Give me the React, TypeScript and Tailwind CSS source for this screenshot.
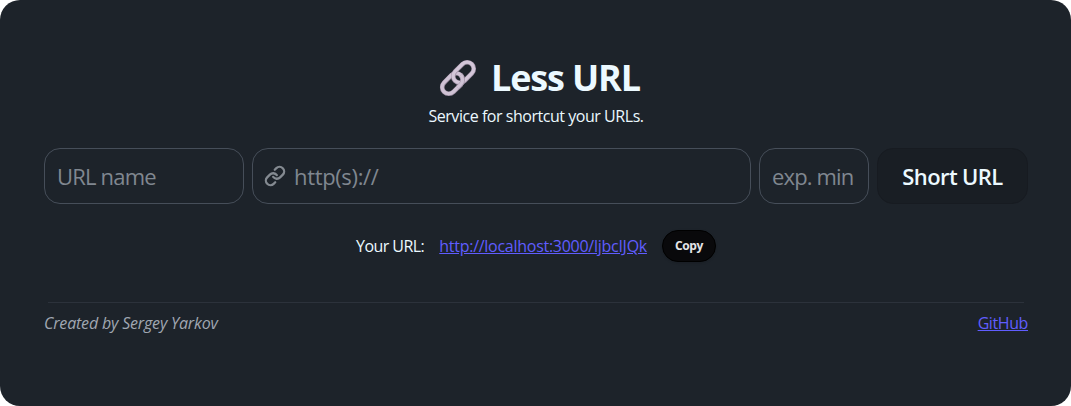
import React from "react";

function LinkIcon() {
  return (
    <svg viewBox="0 0 24 24" className="h-[22px] w-[22px] shrink-0 text-[#848a91]" fill="none" stroke="currentColor" strokeWidth="2.5" strokeLinecap="round" strokeLinejoin="round">
      <path d="M10 13a5 5 0 0 0 7.54.54l3-3a5 5 0 0 0-7.07-7.07l-1.72 1.71" />
      <path d="M14 11a5 5 0 0 0-7.54-.54l-3 3a5 5 0 0 0 7.07 7.07l1.71-1.71" />
    </svg>
  );
}

function ChainLogo() {
  return (
    <svg viewBox="0 0 38 38" className="h-[38px] w-[38px] shrink-0" fill="none">
      <defs>
        <clipPath id="crossing">
          <rect x="12" y="19" width="14" height="12" />
        </clipPath>
      </defs>
      <g transform="rotate(-45 19 19)">
        <rect x="-0.6" y="12.4" width="23.6" height="13.2" rx="6.6" stroke="#a595aa" strokeWidth="4.6" />
        <rect x="-0.6" y="12.2" width="23.6" height="13.2" rx="6.6" stroke="#cfc2d4" strokeWidth="3.3" />
        <rect x="15" y="12.4" width="23.6" height="13.2" rx="6.6" stroke="#a595aa" strokeWidth="4.6" />
        <rect x="15" y="12.2" width="23.6" height="13.2" rx="6.6" stroke="#d3c6d8" strokeWidth="3.3" />
        <g clipPath="url(#crossing)">
          <rect x="-0.6" y="12.4" width="23.6" height="13.2" rx="6.6" stroke="#a595aa" strokeWidth="4.6" />
          <rect x="-0.6" y="12.2" width="23.6" height="13.2" rx="6.6" stroke="#cfc2d4" strokeWidth="3.3" />
        </g>
      </g>
    </svg>
  );
}

const field =
  "h-14 rounded-2xl border border-[#464e59] bg-[#1d232a] text-[#858b94] placeholder:text-[#808790] outline-none text-[22px]";

export default function App() {
  return (
    <div className="h-[406px] w-full bg-white font-['Open_Sans','Noto_Sans',sans-serif] text-[#ecf9ff]">
      <main className="flex h-full flex-col rounded-[20px] bg-[#1d232a] pt-[58px] pr-[43px] pl-11">
        <header className="flex flex-col items-center">
          <h1 className="flex h-10 items-center gap-3.5 pl-[7px] text-4xl font-bold tracking-[-1.15px]">
            <ChainLogo />
            <span>Less URL</span>
          </h1>
          <p className="mt-1.5 h-6 text-base leading-6 tracking-[-0.46px]">Service for shortcut your URLs.</p>
        </header>
        <form className="mt-5 flex gap-2" onSubmit={(e) => e.preventDefault()}>
          <input className={`${field} w-[200px] px-3 tracking-[-0.8px]`} placeholder="URL name" />
          <label className={`${field} flex w-[499px] items-center gap-2 px-[11px]`}>
            <LinkIcon />
            <input className="min-w-0 grow bg-transparent tracking-[-0.35px] outline-none placeholder:text-[#808790]" placeholder="http(s)://" />
          </label>
          <input className={`${field} w-[110px] px-3 tracking-[-0.85px]`} placeholder="exp. min" />
          <button className="h-14 w-[151px] rounded-2xl border border-[#171b21] bg-[#191e24] text-[22px] font-semibold tracking-[-0.6px]">Short URL</button>
        </form>
        <div className="mt-[26px] flex h-8 items-center justify-center gap-[15px] text-base">
          <span className="tracking-[-0.55px]">Your URL:</span>
          <a href="#" className="tracking-[-0.27px] text-[#605dff] underline">http://localhost:3000/ljbcIJQk</a>
          <button className="h-8 w-[54px] rounded-full border border-black bg-[#09090b] text-xs font-bold tracking-[-0.4px] text-[#e4e4e7] shadow">Copy</button>
        </div>
        <hr className="mx-1 mt-10 border-[#2c323b]" />
        <footer className="mt-2 flex h-6 items-center justify-between text-base">
          <span className="tracking-[-0.18px] text-[#a0a7b2] italic">Created by Sergey Yarkov</span>
          <a href="#" className="tracking-[-0.4px] text-[#605dff] underline">GitHub</a>
        </footer>
      </main>
    </div>
  );
}
